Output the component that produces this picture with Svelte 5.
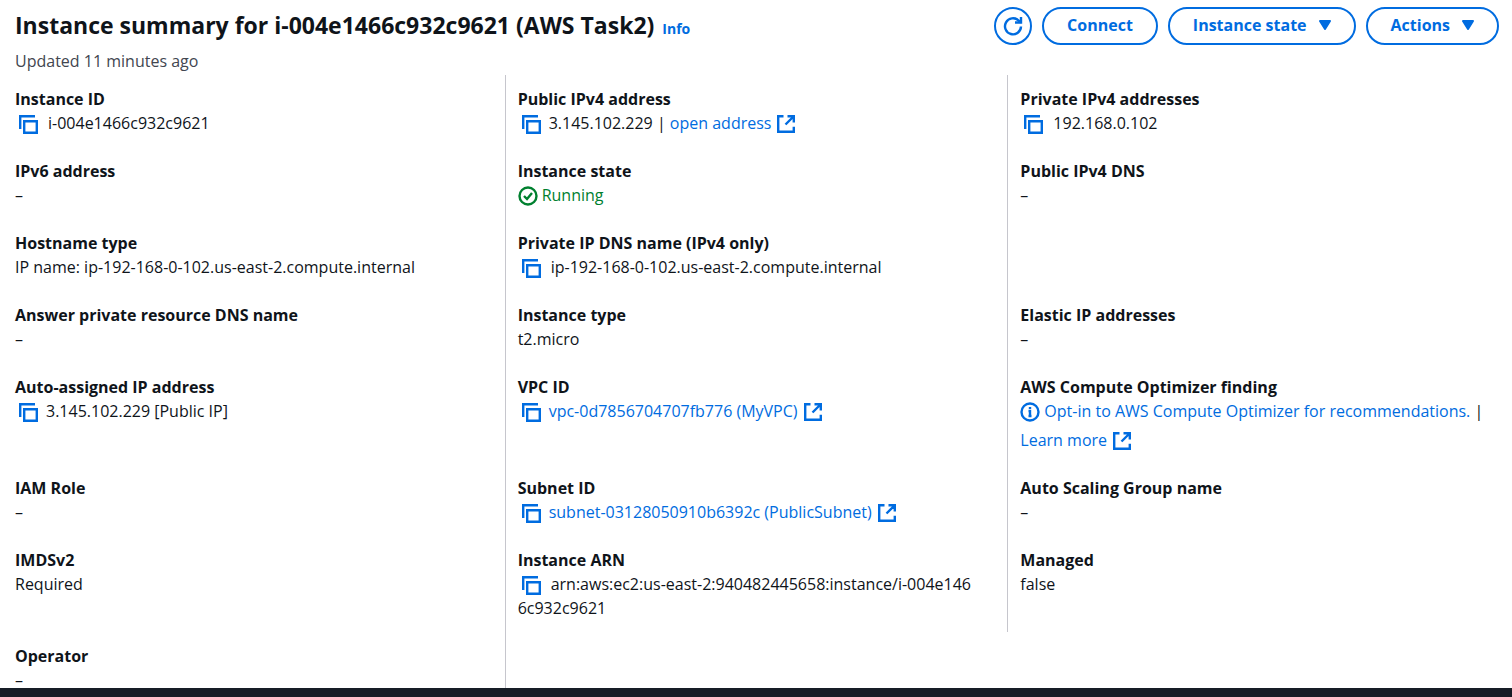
<script>
  const blank = { kind: 'blank' };
  const dash = (label) => ({ label, kind: 'text', value: '–' });

  const fields = [
    { label: 'Instance ID', kind: 'copy', value: 'i-004e1466c932c9621' },
    { label: 'Public IPv4 address', kind: 'copylink', value: '3.145.102.229', link: 'open address' },
    { label: 'Private IPv4 addresses', kind: 'copy', value: '192.168.0.102' },
    dash('IPv6 address'),
    { label: 'Instance state', kind: 'status', value: 'Running' },
    dash('Public IPv4 DNS'),
    { label: 'Hostname type', kind: 'text', value: 'IP name: ip-192-168-0-102.us-east-2.compute.internal' },
    { label: 'Private IP DNS name (IPv4 only)', kind: 'copy', value: 'ip-192-168-0-102.us-east-2.compute.internal' },
    blank,
    dash('Answer private resource DNS name'),
    { label: 'Instance type', kind: 'text', value: 't2.micro' },
    dash('Elastic IP addresses'),
    { label: 'Auto-assigned IP address', kind: 'copy', near: true, value: '3.145.102.229 [Public IP]' },
    { label: 'VPC ID', kind: 'copylink', link: 'vpc-0d7856704707fb776 (MyVPC)' },
    { label: 'AWS Compute Optimizer finding', kind: 'finding', value: 'Opt-in to AWS Compute Optimizer for recommendations.', link: 'Learn more' },
    dash('IAM Role'),
    { label: 'Subnet ID', kind: 'copylink', link: 'subnet-03128050910b6392c (PublicSubnet)' },
    dash('Auto Scaling Group name'),
    { label: 'IMDSv2', kind: 'text', value: 'Required' },
    { label: 'Instance ARN', kind: 'copy', value: 'arn:aws:ec2:us-east-2:940482445658:instance/i-004e146', rest: '6c932c9621' },
    { label: 'Managed', kind: 'text', value: 'false' },
    dash('Operator'),
    blank
  ];
</script>

{#snippet copyButton(label, near)}<button class="copy" class:near type="button" aria-label={`Copy ${label}`}><svg viewBox="0 0 20 20" width="20" height="20"><path d="M1.200 14V1.200h14.800" /><path d="M5.200 6.200h12.600v11.600H5.200z" /></svg></button>{/snippet}

{#snippet external()}<svg class="external" viewBox="0 0 18 18" width="18" height="18" aria-hidden="true"><path d="M6.500 1.200H1.200v15.600h15.600v-5" /><path d="M10.500 1.200h6.300v6.300M16.500 1.500l-8 8" /></svg>{/snippet}

{#snippet caret()}<svg class="caret" viewBox="0 0 12 10" width="12" height="10" aria-hidden="true"><path d="M1 1h10L6 9z" /></svg>{/snippet}

<div class="page">
  <main>
    <header>
      <div class="title">
        <h1>Instance summary for i-004e1466c932c9621 (AWS Task2) <a class="info" href="#info">Info</a></h1>
        <p>Updated 11 minutes ago</p>
      </div>
      <div class="actions">
        <button class="round" type="button" aria-label="Refresh">
          <svg viewBox="0 0 20 20" width="20" height="20"><path d="M18 10.500a8 8 0 1 1-2.500-6l2.500 2" /><path d="M18 1v5.500h-6" /></svg>
        </button>
        <button type="button">Connect</button>
        <button type="button">Instance state {@render caret()}</button>
        <button type="button">Actions {@render caret()}</button>
      </div>
    </header>

    <dl>
      {#each fields as f}
        <div class="field">
          {#if f.kind !== 'blank'}
            <dt>{f.label}</dt>
            <dd>
              {#if f.kind === 'copy'}
                {@render copyButton(f.label, f.near)}{f.value}{#if f.rest}<wbr />{f.rest}{/if}
              {:else if f.kind === 'copylink'}
                {@render copyButton(f.label, true)}{#if f.value}{f.value}&nbsp;|&nbsp;{/if}<a href="#open">{f.link}{@render external()}</a>
              {:else if f.kind === 'status'}
                <span class="running"><svg class="badge" viewBox="0 0 20 20" width="20" height="20" aria-hidden="true"><circle cx="10" cy="10" r="8.500" /><path d="M6 10l3 3 5-6" /></svg>{f.value}</span>
              {:else if f.kind === 'finding'}
                <a href="#opt-in"><svg class="badge" viewBox="0 0 20 20" width="20" height="20" aria-hidden="true"><circle cx="10" cy="10" r="8.500" /><path d="M10 5v2M8.500 9H10v5M8.500 14h3" /></svg>{f.value}</a> |
                <a class="more" href="#learn">{f.link}{@render external()}</a>
              {:else}
                {f.value}
              {/if}
            </dd>
          {/if}
        </div>
      {/each}
    </dl>
  </main>
  <footer></footer>
</div>

<style>
  :global(body) {
    margin: 0;
    background: #fff;
  }
  .page {
    display: flex;
    flex-direction: column;
    height: 100vh;
    color: #0f141a;
    font: 16px/24px 'Open Sans', 'Noto Sans', sans-serif;
  }
  main {
    flex: 1;
    min-height: 0;
    overflow: hidden;
  }
  footer {
    flex: none;
    height: 9px;
    background: #161d26;
  }
  header {
    display: flex;
    justify-content: space-between;
    padding: 7px 13px 0 15px;
  }
  h1 {
    margin: 0;
    font-size: 23px;
    line-height: 36px;
    font-weight: 700;
  }
  .info {
    margin-left: 2px;
    font-size: 14px;
  }
  p {
    margin: 2px 0 0;
    color: #424650;
  }
  a {
    color: #006ce0;
    text-decoration: none;
  }
  .actions {
    display: flex;
    align-items: flex-start;
    gap: 10px;
  }
  .actions button {
    display: flex;
    align-items: center;
    gap: 12px;
    height: 38px;
    padding: 0 23px 2px;
    border: 2px solid #006ce0;
    border-radius: 20px;
    background: #fff;
    color: #006ce0;
    font: inherit;
    font-weight: 700;
  }
  .actions .round {
    justify-content: center;
    width: 38px;
    padding: 0;
  }
  svg {
    fill: none;
    stroke: currentColor;
    stroke-width: 2.400;
  }
  .caret {
    fill: currentColor;
    stroke-width: 2;
    stroke-linejoin: round;
  }
  dl {
    display: grid;
    grid-template-columns: repeat(3, minmax(0, 1fr));
    margin: 2px 2px 0;
  }
  .field {
    padding: 12px;
    border-left: 1px solid #c6c6cd;
    min-height: 48px;
  }
  .field:nth-child(3n + 1) {
    border-color: transparent;
  }
  dt {
    font-weight: 700;
  }
  dd {
    margin: 0;
    overflow-wrap: anywhere;
  }
  .copy {
    height: 20px;
    margin: 0 9px 0 4px;
    padding: 0;
    border: 0;
    background: none;
    color: #006ce0;
    vertical-align: -6px;
  }
  .copy.near {
    margin-right: 7px;
  }
  .copy svg {
    display: block;
  }
  .external {
    margin-left: 6px;
    vertical-align: -4px;
  }
  .badge {
    margin-right: 4px;
    vertical-align: -5px;
  }
  .running {
    color: #00802f;
  }
  .more {
    display: inline-block;
    padding-top: 5px;
  }
</style>
